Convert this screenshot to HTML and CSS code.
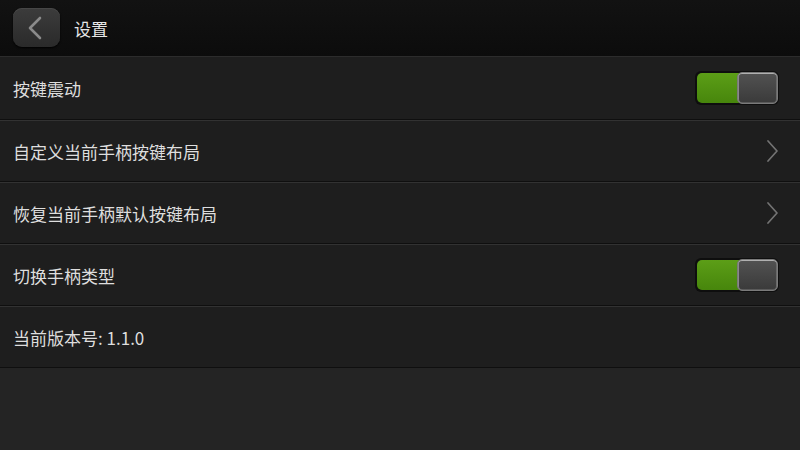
FILE: index.html
```html
<!DOCTYPE html>
<html lang="zh">
<head>
<meta charset="utf-8">
<link rel="stylesheet" href="styles.css">
</head>
<body>
<div class="app">
  <header class="topbar">
    <div class="back">
      <svg width="20" height="26" viewBox="0 0 20 26"><path d="M15 3 L5 13 L15 23" fill="none" stroke="#8a8a8a" stroke-width="2.6" stroke-linecap="round" stroke-linejoin="round"/></svg>
    </div>
    <div class="title">设置</div>
  </header>
  <div class="list">
    <div class="row first">
      <span class="label">按键震动</span>
      <div class="toggle"><div class="on"></div><div class="knob"></div></div>
    </div>
    <div class="row">
      <span class="label">自定义当前手柄按键布局</span>
      <svg class="chev" width="14" height="24" viewBox="0 0 14 24"><path d="M3 2 L12 12 L3 22" fill="none" stroke="#737373" stroke-width="1.7" stroke-linecap="round" stroke-linejoin="round"/></svg>
    </div>
    <div class="row">
      <span class="label">恢复当前手柄默认按键布局</span>
      <svg class="chev" width="14" height="24" viewBox="0 0 14 24"><path d="M3 2 L12 12 L3 22" fill="none" stroke="#737373" stroke-width="1.7" stroke-linecap="round" stroke-linejoin="round"/></svg>
    </div>
    <div class="row">
      <span class="label">切换手柄类型</span>
      <div class="toggle"><div class="on"></div><div class="knob"></div></div>
    </div>
    <div class="row">
      <span class="label">当前版本号: 1.1.0</span>
    </div>
  </div>
</div>
</body>
</html>
```
FILE: styles.css
```css
html, body {
  margin: 0;
  padding: 0;
  background: #242424;
}
body {
  width: 800px;
  height: 450px;
  overflow: hidden;
  font-family: "Noto Sans CJK SC", "Noto Sans", sans-serif;
  color: #dedede;
}
.app {
  display: flex;
  flex-direction: column;
}
.topbar {
  height: 56px;
  background: linear-gradient(#121212, #0c0c0c);
  display: flex;
  align-items: center;
  padding-left: 13px;
  box-sizing: border-box;
}
.back {
  width: 47px;
  height: 39px;
  border-radius: 9px;
  background: linear-gradient(#3c3c3c, #2a2a2a);
  box-shadow: inset 0 1px 0 #474747, 0 1px 2px #000;
  display: flex;
  align-items: center;
  justify-content: center;
  margin-top: -1px;
}
.back svg {
  margin-left: -4px;
}
.title {
  margin-left: 14px;
  font-size: 17px;
  color: #e6e6e6;
}
.list {
  display: flex;
  flex-direction: column;
}
.row {
  height: 60px;
  border-top: 1px solid #323232;
  border-bottom: 1px solid #0f0f0f;
  background: #1e1e1e;
  display: flex;
  align-items: center;
  justify-content: space-between;
  padding: 0 22px 0 13px;
}
.row.first {
  height: 62px;
  border-top-color: #2c2c2c;
}
.label {
  font-size: 17px;
  color: #dedede;
}
.chev {
  margin-right: -1px;
}
.toggle {
  width: 84px;
  height: 34px;
  box-sizing: border-box;
  border-radius: 6px;
  background: #0e0e0e;
  padding: 1px;
  display: flex;
  align-items: stretch;
  margin-right: -1px;
}
.on {
  width: 44px;
  border-radius: 5px 0 0 5px;
  background: linear-gradient(#5c9e17, #47860c);
  margin: 1px -4px 1px 1px;
}
.knob {
  flex: 1;
  border-radius: 5px;
  box-sizing: border-box;
  border: 1px solid #7a7a7a;
  background: linear-gradient(#525252, #3a3a3a);
  box-shadow: inset 0 1px 0 #b0b0b0, inset 1px 0 0 #8a8a8a, inset -1px 0 0 #6a6a6a, inset 0 -1px 0 #5a5a5a;
}
```
